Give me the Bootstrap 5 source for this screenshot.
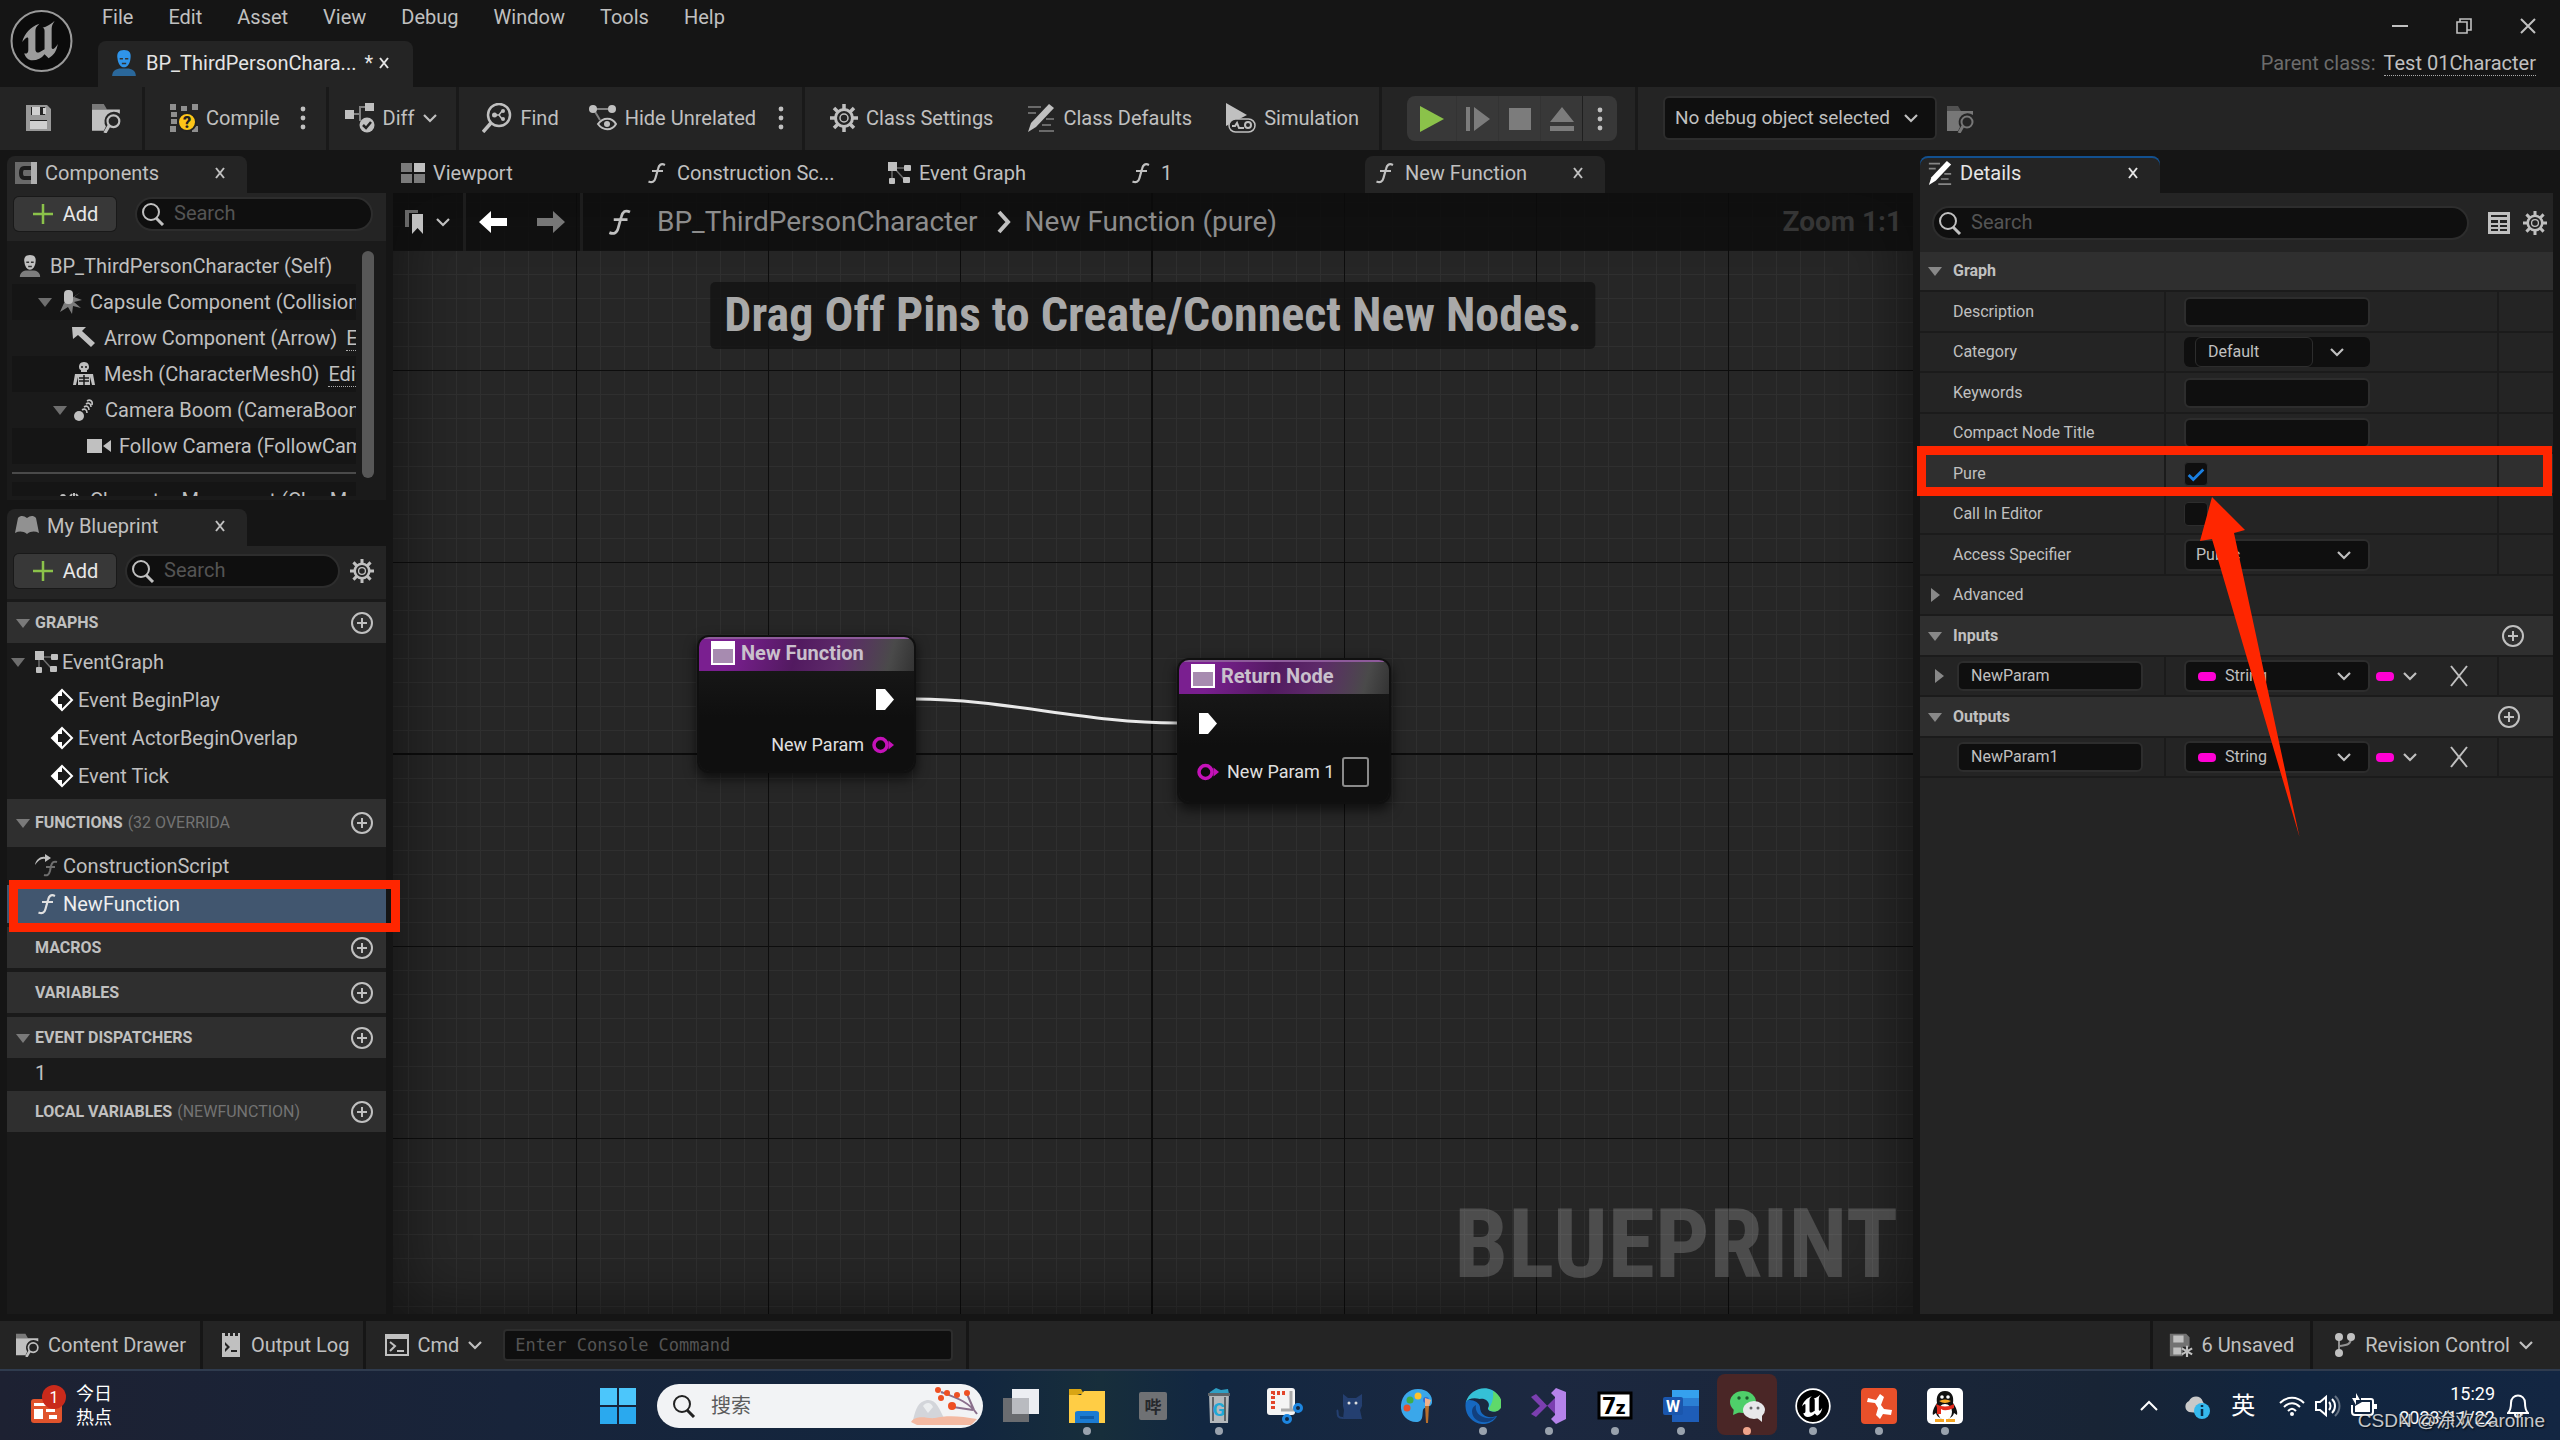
<!DOCTYPE html>
<html lang="en">
<head>
<meta charset="utf-8">
<meta name="viewport" content="width=device-width, initial-scale=1">
<title>BP_ThirdPersonCharacter</title>
<link href="https://cdn.jsdelivr.net/npm/bootstrap@5.3.0/dist/css/bootstrap.min.css" rel="stylesheet">
<style>
:root{--ink:#c0c0c0;--panel:#242424;--deep:#151515;--list:#1a1a1a;--head:#2f2f2f;--field:#0f0f0f;--red:#ff2600;--pink:#ff00d4}
body{font-family:Roboto,"Noto Sans CJK SC",sans-serif;font-size:20px;line-height:24px;color:var(--ink);background:var(--deep);min-height:100vh}
button,input,select{font:inherit;color:inherit}
button{background:none;border:0;padding:0;display:inline-flex;align-items:center;white-space:nowrap}
a,a:hover{color:inherit;text-decoration:none}
svg{display:block;flex:none;fill:currentColor;stroke:none;stroke-width:2}
.ln{fill:none;stroke:currentColor}
.i14{width:14px;height:14px}.i16{width:16px;height:16px}.i22{width:22px;height:22px}.i24{width:24px;height:24px}.i28{width:28px;height:28px}.i30{width:30px;height:30px}.i36{width:36px;height:36px}
.top-zone{height:87px}
.logo-box{width:98px;padding:9px 0 0 10px}
.menu-line{height:41px;padding-bottom:7px;gap:35px}
.menu-line a:first-child{margin-left:4px}
.doc-tab{height:46px;width:315px;background:var(--panel);border-radius:8px 8px 0 0;padding:0 0 2px 12px;color:#e4e4e4}
.dotted{border-bottom:1px dotted #aaa}
.toolbar-line{height:63px;background:var(--panel)}
.seg{padding:0 20px 2px 25px;gap:34px;border-right:3px solid #191919}
.seg.files{gap:39px}
.seg.build{gap:20px}
.seg.compare{padding:0 18px 2px 16px}
.seg.lookup{padding:0 18px 2px 23px;gap:22px}
.seg button,.stat button{gap:8px}
.play-group{margin:0 18px 0 25px;height:45px;background:#383838;border-radius:8px;overflow:hidden}
.play-group button{width:42px;justify-content:center;border-right:1px solid #333;color:#7c7c7c}
.play-group button:first-child{width:50px;color:#8bc24a}
.play-group button:nth-child(4){border-color:#1f1f1f}
.play-group button:last-child{width:34px;border:0;color:var(--ink)}
.combo{--bs-form-select-bg-img:url("data:image/svg+xml,%3Csvg xmlns='http://www.w3.org/2000/svg' viewBox='0 0 16 16'%3E%3Cpath d='M2 5l6 6 6-6' fill='none' stroke='%23c0c0c0' stroke-width='2.2'/%3E%3C/svg%3E");background-color:var(--field);border:2px solid #2d2d2d;border-radius:6px;color:var(--ink);background-size:16px 16px;background-position:right 16px center;padding:0 0 0 10px;line-height:20px}
.combo.debug-pick{width:274px;height:44px;font-size:19px;margin:0 10px 2px 25px}
.side-left{width:386px;padding-left:7px}
.side-right{width:640px;padding-right:7px}
.gut{width:7px}
.tab-line{height:43px;padding-top:6px}
.ptab{background:var(--panel);border-radius:8px 8px 0 0;width:240px;height:37px;padding:0 20px 3px 8px}
.graph-tabs>button{padding-bottom:3px}
.ptab .x{margin-left:auto}
.addbtn{width:102px;height:34px;flex:none;background:#383838;border-radius:5px;box-shadow:0 0 0 1px #191919;justify-content:center;color:#e8e8e8;gap:9px}
.seek{background:var(--field);border:2px solid #2d2d2d;border-radius:17px;height:34px;padding-left:4px;gap:9px}
.seek input{background:none;border:0;outline:0;min-width:0;padding:0 0 2px}
::placeholder{color:#545454!important;opacity:1}
.tree-box{background:var(--list);height:259px;padding:7px 11px 4px 5px}
.tree{height:248px;overflow:hidden;width:344px}
.tree li,.bp li{height:36px;display:flex;align-items:center;white-space:nowrap}
.tree li:nth-child(even){background:#151515}
.tree li svg:first-child,.bp li svg:first-child{color:#6e6e6e}
.tree li svg.on:first-child,.bp li svg.on{color:var(--ink)}
.tree .rule{height:18px;background:none!important}
.tree .rule i{height:2px;background:#4a4a4a;width:100%;display:block}
.lv0{padding-left:6px}.lv1{padding-left:25px}.lv2{padding-left:60px}.lv3{padding-left:40px}.lv4{padding-left:75px}
.tree li{gap:5px}.tree li span{margin-left:3px}
.thumb{width:12px;height:227px;border-radius:6px;background:#575757;margin:3px 0 0 6px}
.bp{background:var(--list);padding-top:3px}
.bp li{height:38px}
.bp .row-graph{padding-left:3px}
.bp .row-event{padding-left:43px}
.bp .row-item{padding-left:28px}
.bp .row-short{height:33px;padding-bottom:3px}
.bp h2{font-size:16px;font-weight:700;line-height:20px;height:41px;margin:0 0 4px;background:var(--head);padding:0 12px 0 8px;display:flex;align-items:center}
.bp h2 small{font-size:16px;font-weight:400;color:#737373;margin-left:5px}
.bp h2 .i16{color:#7a7a7a;margin-right:4px}
.bp h2 button{margin-left:auto}
.bp h2.flat{margin-bottom:0}
.bp h2.tall{height:48px}
.redbox{position:absolute;border:9px solid var(--red);pointer-events:none;z-index:5}
.redbox.on-list{inset:-5px -14px -9px 2px}
.redbox.on-prop{inset:-8px 1px -3px -3px}
.picked{position:relative;background:#41566f;color:#eee}
.picked svg.on{color:#e0e0e0!important}
.gt{gap:8px}
.w-tab{width:242px}
.canvas{position:relative;overflow:hidden;background-color:#262626;background-image:
 linear-gradient(#0c0c0c,#0c0c0c),linear-gradient(#0c0c0c,#0c0c0c),
 linear-gradient(90deg,#0d0d0d 1px,transparent 1px),linear-gradient(#0d0d0d 1px,transparent 1px),
 linear-gradient(90deg,#2f2f2f 1px,transparent 1px),linear-gradient(#2f2f2f 1px,transparent 1px);
 background-size:2px 100%,100% 2px,192px 192px,192px 192px,24px 24px,24px 24px;
 background-position:758px 0,0 560px,183px 177px,183px 177px,15px 9px,15px 9px;
 background-repeat:no-repeat,no-repeat,repeat,repeat,repeat,repeat}
.canvas::after{content:"";position:absolute;inset:0;box-shadow:inset 0 0 60px 8px rgba(0,0,0,.45);pointer-events:none}
.crumbs{position:relative;z-index:2;height:58px;background:rgba(12,12,12,.82);font-size:28px;line-height:32px;color:#8c8c8c;padding:0 11px 0 12px}
.crumbs .bar{width:3px;height:58px;background:#1d1d1d}
.hint{position:absolute;z-index:2;left:50%;top:89px;transform:translateX(-50%);height:67px;padding:0 14px;background:rgba(20,20,20,.85);color:#a9a9a9;border-radius:5px;font-weight:700;font-size:48px;line-height:65px;font-family:"Roboto Condensed",Roboto,sans-serif;white-space:nowrap}
.stamp{position:absolute;right:15px;bottom:20px;z-index:2;font-family:"Roboto Condensed",Roboto,sans-serif;font-weight:700;font-size:96px;line-height:100px;color:rgba(255,255,255,.18)}
.node{position:absolute;z-index:3;background:linear-gradient(#1c1c1c,#0f0f0f 60%);border-radius:10px;box-shadow:0 0 0 2px #101010,0 5px 12px 3px rgba(0,0,0,.6);color:#e0e0e0;font-size:18px;line-height:22px;overflow:hidden;white-space:nowrap}
.node header{height:34px;background:linear-gradient(105deg,#7a1f90 0,#7a1f90 15%,#521a60 45%,#5d2a69 65%,#4a4a4a 88%,#333);border-top:2px solid #8d5a9a;color:#c9c0cc;font-weight:700;font-size:20px;padding:0 12px 4px;gap:6px}
.node .flow-pin{height:56px;padding:0 20px}
.node .data-pin{height:36px;padding:0 20px}
.node.ret .flow-pin{height:58px}
.node.ret .data-pin{height:40px;padding:0 18px}
.node .tick{width:27px;height:30px;flex:none;border:2px solid #8a8a8a;border-radius:3px;background:none;appearance:none;margin:0}
.wire{position:absolute;left:502px;top:496px;z-index:2;width:304px;height:44px;fill:none}
.props{background:var(--panel);font-size:16px;line-height:20px}
.prop-tools{height:59px;padding:0 6px 0 12px;font-size:20px}
.prow{display:flex;height:40px;border-bottom:2px solid #1b1b1b}
.prow:nth-child(even){height:41px}
.prow>.c1{width:246px;border-right:2px solid #1b1b1b;padding-left:33px;display:flex;align-items:center}
.prow>.c1.named{padding-left:11px;gap:10px}
.prow>.c2{flex:1;border-right:2px solid #1b1b1b;padding-left:18px;display:flex;align-items:center}
.prow>.c3{width:54px}
.prow.hd{background:var(--head);font-weight:700;align-items:center;padding:0 28px 0 7px;gap:10px}
.prow.hd.adv{background:none;font-weight:400}
.prow.lit{background:var(--head);position:relative}
.prow .arr{color:#888}
.fld{background:var(--field);border:2px solid #2d2d2d;border-radius:6px;width:186px;height:30px;padding:0 12px 2px;line-height:18px}
.fld.inner{width:118px;margin-left:11px;border-width:1px}
.catbox{background:var(--field);border-radius:6px;width:186px;height:30px}
.combo.w{width:186px;height:32px;font-size:16px}
.combo.typed{padding-left:39px}
.pill{display:inline-block;width:18px;height:9px;border-radius:4px;background:var(--pink)}
.pill.over{position:absolute;left:14px;top:12px}
.kind{margin-left:6px}
.drop{margin-left:27px}
.drop svg{stroke-width:1px}
.tickbox{appearance:none;width:24px;height:24px;background:var(--field);border:1px solid #2d2d2d;border-radius:4px;margin:0}
.tickbox:checked{background-image:url("data:image/svg+xml,%3Csvg xmlns='http://www.w3.org/2000/svg' viewBox='0 0 24 24'%3E%3Cpath d='M4 13l5 5L20 7' fill='none' stroke='%231a7fe0' stroke-width='3'/%3E%3C/svg%3E")}
.pointer{position:absolute;left:280px;top:43px;width:100px;height:342px;color:var(--red);z-index:6;pointer-events:none}
.stat{height:48px;margin-top:7px;background:var(--panel)}
.stat>*{border-right:3px solid #161616}
.stat>.last{border-right:0;padding:0 26px 0 20px}
.stat>.side{padding:0 14px 0 16px}
.cons{font-family:"DejaVu Sans Mono","Liberation Mono",monospace;font-size:17px;background:var(--field);border:2px solid #2d2d2d;border-radius:4px;width:450px;height:32px;padding:0 10px;margin-left:20px}
.taskbar{height:71px;border-top:2px solid #2f3b4e;background:linear-gradient(90deg,#1d2132 0,#18243a 20%,#12263f 38%,#172e3b 43%,#122741 47%,#1c2840 60%,#182435 82%,#11253f 90%,#132642);color:#fff;position:relative}
.apps{gap:30px}
.app{width:36px;height:69px;position:relative;justify-content:center}
.app.run::after{content:"";position:absolute;bottom:5px;left:14px;width:8px;height:8px;border-radius:4px;background:#99a2ad}
.app.hot::before{content:"";position:absolute;inset:3px -12px 5px;background:#4a2626;border-radius:8px}
.app.hot::after{background:#f0a58c}
.app svg{position:relative}
.news{width:600px;padding-left:30px;gap:10px;font-size:18px}
.find-pill{width:326px;height:44px;border-radius:22px;background:#f2f3f5;color:#3c3c3c;padding-left:15px;gap:15px;margin:0 20px 0 21px}
.find-pill input{border:0;background:none;outline:0;width:150px;padding:0}
.find-pill input::placeholder{color:#5c5c5c!important}
.mark-note{position:absolute;right:15px;bottom:5px;font:19px/28px "Liberation Sans","Noto Sans CJK SC",sans-serif;color:#e4e4e4;text-shadow:1px 1px 2px #000;opacity:.85}
.clock{font-size:18px;line-height:24px;text-align:right}
</style>
<script src="https://cdn.jsdelivr.net/npm/bootstrap@5.3.0/dist/js/bootstrap.bundle.min.js"></script>
</head>
<body class="d-flex flex-column">
<svg width="0" height="0" class="position-absolute">
<defs>
<symbol id="x" viewBox="0 0 14 14"><path class="ln" d="M3 2l8 10M11 2L3 12"/></symbol>
<symbol id="chev" viewBox="0 0 16 16"><path class="ln" stroke-width="2.200" d="M2 5l6 6 6-6"/></symbol>
<symbol id="down" viewBox="0 0 16 16"><path d="M1 4h14L8 13z"/></symbol>
<symbol id="right" viewBox="0 0 16 16"><path d="M4 1l9 7-9 7z"/></symbol>
<symbol id="dots" viewBox="0 0 6 28"><circle cx="3" cy="5" r="2.400"/><circle cx="3" cy="14" r="2.400"/><circle cx="3" cy="23" r="2.400"/></symbol>
<symbol id="plus" viewBox="0 0 24 24"><circle class="ln" cx="12" cy="12" r="10"/><path class="ln" d="M12 7v10M7 12h10"/></symbol>
<symbol id="mag" viewBox="0 0 24 24"><circle class="ln" cx="10" cy="10" r="8"/><path class="ln" stroke-width="3" d="M15 16l7 7"/></symbol>
<symbol id="gear" viewBox="0 0 28 28"><circle class="ln" cx="14" cy="14" r="8.500" stroke-width="3"/><circle class="ln" cx="14" cy="14" r="4" stroke-width="1.500"/><g class="ln" stroke-width="3.500"><path d="M14 0v5M14 23v5M0 14h5M23 14h5M4 4l4 4M20 20l4 4M4 24l4-4M20 8l4-4"/></g></symbol>
<symbol id="fn" viewBox="0 0 24 24"><path class="ln" stroke-width="2.200" d="M20 4c-4-2-6 0-7 4l-2.500 9c-1 4-3.500 5-7 3.500M7 10h11"/></symbol>
<symbol id="save" viewBox="0 0 28 28"><path d="M1 1h21l4 4v22H1zM6 3v8h14V3zm-1 13v9h17v-9z" fill-rule="evenodd" opacity=".75"/><path d="M7 3h8v8H7zM18 4h3v6h-3zM5 17h17v8H5z" fill="#d0d0d0"/></symbol>
<symbol id="browse" viewBox="0 0 28 28"><path d="M0 1h11l3 5H0z" opacity=".55"/><path d="M0 6h26v4a9 9 0 0 0-13 12l-2 4H0z"/><circle class="ln" cx="20" cy="17" r="5.500"/><path class="ln" stroke-width="3" d="M16 21l-4 7"/></symbol>
<symbol id="nodes" viewBox="0 0 24 24"><path d="M1 1h9v9H1z"/><rect x="17" y="4" width="7" height="6" rx="1"/><rect x="16" y="16" width="7" height="6" rx="1"/><rect x="2" y="17" width="6" height="6" rx="1"/><path class="ln" opacity=".5" stroke-width="1.500" d="M5 10v8M9 7h9M9 9l8 9"/></symbol>
<symbol id="pencil" viewBox="0 0 28 28"><path d="M22 0l5 4L9 23 1 28l3-9z"/><path class="ln" opacity=".45" d="M1 3h13M1 9h8M19 15h8M15 21h9M12 27h15"/></symbol>
<symbol id="person" viewBox="0 0 24 26"><path d="M12 1c5 0 7 3 6 8-.5 5-3 8-6 8s-5.500-3-6-8C5 4 7 1 12 1z"/><path opacity=".6" d="M1 25c0-5 4-7 8-7h6c4 0 8 2 8 7z"/><path d="M8 9h3M13 9h3M10 13.500h4" stroke="#333" stroke-width="1.500" fill="none"/></symbol>
<symbol id="event" viewBox="0 0 24 24"><path class="ln" style="stroke:#fff" d="M12 2l10 10-10 10L2 12z"/><path fill="#fff" d="M12 2v6H8v8h4v6L2 12z"/></symbol>
<symbol id="expin" viewBox="0 0 18 21"><path fill="#fff" d="M0 0h9l9 10.500L9 21H0z"/></symbol>
<symbol id="dpin" viewBox="0 0 22 18"><circle cx="8.500" cy="9" r="6.500" fill="#0a0a0a" stroke="#c412b8" stroke-width="3.500"/><path fill="#c412b8" d="M16.500 4.500L22 9l-5.500 4.500z"/></symbol>
<symbol id="nico" viewBox="0 0 24 24"><path fill="#fff" d="M0 0h24v24H0z"/><path fill="#a78bb0" d="M2 8h20v14H2z"/></symbol>
<symbol id="ue" viewBox="0 0 62 62"><path d="M12 32c2-8 8-15 17-18-3 3-4 4-4 7v18c0 3 2 4 4 3l5-3V21c0-2-1-3-2-3 4-1 9-4 12-7-2 3-3 5-3 8v19c1 2 3 1 6-4-1 7-4 11-9 14l-4-4c-3 4-7 6-12 6-4 0-7-3-8-7 2 1 4 0 4-3V29c0-3-3-1-6 3z"/></symbol>
</defs>
</svg>

<header class="top-zone d-flex">
  <div class="logo-box"><svg width="63" height="64" viewBox="0 0 62 62"><circle cx="31" cy="31" r="29.500" fill="#0b0b0b" stroke="#9a9a9a" stroke-width="2"/><use href="#ue" fill="#9c9c9c"/></svg></div>
  <div class="flex-grow-1">
    <nav class="menu-line d-flex align-items-center"><a href="#">File</a><a href="#">Edit</a><a href="#">Asset</a><a href="#">View</a><a href="#">Debug</a><a href="#">Window</a><a href="#">Tools</a><a href="#">Help</a></nav>
    <div class="doc-tab d-flex align-items-center"><svg class="i28" style="color:#2f94ea"><use href="#person"/></svg><span class="ms-2">BP_ThirdPersonChara...</span><span class="ms-2">*</span><button class="ms-1" aria-label="Close"><svg class="i14"><use href="#x"/></svg></button></div>
  </div>
  <div class="d-flex flex-column align-items-end pe-4">
    <div class="d-flex align-items-center gap-5" style="height:51px">
      <button aria-label="Minimize"><svg class="i16" viewBox="0 0 16 16"><path class="ln" d="M0 8h16"/></svg></button>
      <button aria-label="Restore"><svg class="i16" viewBox="0 0 16 16"><path class="ln" stroke-width="1.600" d="M1 4h10v11H1zM4 4V1h11v11h-4"/></svg></button>
      <button aria-label="Close"><svg class="i16" viewBox="0 0 16 16"><path class="ln" d="M1 1l14 14M15 1L1 15"/></svg></button>
    </div>
    <div><span class="me-2" style="color:#6c6c6c">Parent class:</span><a href="#" class="dotted">Test 01Character</a></div>
  </div>
</header>

<div class="toolbar-line d-flex align-items-stretch">
  <div class="seg files d-flex"><button aria-label="Save"><svg class="i28"><use href="#save"/></svg></button><button aria-label="Browse"><svg class="i30"><use href="#browse"/></svg></button></div>
  <div class="seg build d-flex"><button><svg class="i28" viewBox="0 0 28 28"><g fill="#8f8f8f"><path d="M0 0h6v6H0zM11 2h6v5h-6zM22 0h6v6h-6zM1 8h6v5H1zM1 15h6v5H1zM0 22h6v6H0zM22 22h6v6h-6z"/></g><circle cx="17" cy="18" r="9" fill="#fdc518" stroke="#222"/><text x="17" y="24" text-anchor="middle" font-size="16" font-weight="900" fill="#222">?</text></svg>Compile</button><button aria-label="Compile options"><svg width="6" height="28"><use href="#dots"/></svg></button></div>
  <div class="seg compare d-flex"><button><svg class="i30" viewBox="0 0 30 30"><path d="M0 7h9v9H0zM20 0h9v8h-9z"/><path class="ln" opacity=".6" d="M9 11h6V4h5M15 11v7"/><circle cx="22" cy="22" r="7.500"/><path d="M18 22l3 3 5-6" stroke="#222" stroke-width="2.500" fill="none"/></svg>Diff<svg class="i16"><use href="#chev"/></svg></button></div>
  <div class="seg lookup d-flex"><button><svg class="i30" viewBox="0 0 30 30"><circle class="ln" cx="17" cy="12" r="11" stroke-width="2.500"/><path class="ln" stroke-width="3.500" d="M9 20l-8 9"/><circle cx="12.500" cy="12" r="2.500"/><circle cx="21" cy="8" r="2"/><circle cx="21" cy="16" r="2"/><path class="ln" stroke-width="1.500" d="M13 12h4l3-4M17 12l3 4"/></svg>Find</button>
  <button class="ms-2"><svg class="i28" viewBox="0 0 28 28"><circle cx="4" cy="5" r="4"/><circle cx="23" cy="5" r="4"/><path class="ln" opacity=".6" d="M5 5h18M5 6l6 10"/><path class="ln" d="M9 20c5-7 14-7 18 0-4 7-13 7-18 0z"/><circle cx="18" cy="20" r="3"/></svg>Hide Unrelated</button><button aria-label="Hide options"><svg width="6" height="28"><use href="#dots"/></svg></button></div>
  <div class="seg d-flex"><button><svg class="i28"><use href="#gear"/></svg>Class Settings</button><button><svg class="i28"><use href="#pencil"/></svg>Class Defaults</button><button><svg class="i30" viewBox="0 0 30 30"><path d="M0 0l21 12L0 23z"/><rect x="3" y="16" width="26" height="13" rx="6.500" fill="#242424" stroke="currentColor" stroke-width="1.500"/><circle class="ln" cx="22" cy="22" r="3"/><path class="ln" d="M6 23h3l2-3 2 5h5"/></svg>Simulation</button></div>
  <div class="seg d-flex align-items-center p-0"><div class="play-group d-flex">
    <button aria-label="Play"><svg width="26" height="26" viewBox="0 0 26 26"><path d="M1 0l24 13L1 26z"/></svg></button>
    <button aria-label="Step"><svg class="i24" viewBox="0 0 24 24"><path d="M0 0h4v24H0zM8 0l16 12L8 24z"/></svg></button>
    <button aria-label="Stop"><svg class="i22" viewBox="0 0 22 22"><path d="M0 0h22v22H0z"/></svg></button>
    <button aria-label="Eject"><svg class="i24" viewBox="0 0 24 24"><path d="M12 0l12 15H0zM0 19h24v5H0z"/></svg></button>
    <button aria-label="Play options"><svg width="6" height="28"><use href="#dots"/></svg></button></div></div>
  <div class="d-flex align-items-center"><select class="form-select combo debug-pick" aria-label="Debug object"><option>No debug object selected</option></select><button aria-label="Browse debug object" style="color:#777"><svg class="i28"><use href="#browse"/></svg></button></div>
</div>

<main class="d-flex flex-grow-1">
  <aside class="side-left d-flex flex-column">
    <div class="tab-line"><div class="ptab d-flex align-items-center"><svg class="i22" viewBox="0 0 22 22"><path d="M0 0h22v22H0z" opacity=".45"/><path d="M16 6H9q-3 0-3 5t3 5h7" fill="none" stroke="#1c1c1c" stroke-width="4"/><path d="M16 0h6v22h-6z" opacity=".8"/></svg><span class="ms-2">Components</span><button class="x" aria-label="Close"><svg class="i14"><use href="#x"/></svg></button></div></div>
    <div class="d-flex align-items-center" style="background:var(--panel);height:48px;padding:0 13px 7px 7px">
      <button class="addbtn"><svg class="i22" viewBox="0 0 22 22" style="color:#8bc24a"><path class="ln" stroke-width="2.500" d="M11 1v20M1 11h20"/></svg>Add</button>
      <label class="seek d-flex align-items-center flex-grow-1" style="margin-left:19px"><svg class="i24"><use href="#mag"/></svg><input class="w-100" placeholder="Search" aria-label="Search components"></label>
    </div>
    <div class="tree-box d-flex">
      <ul class="tree list-unstyled m-0">
        <li class="lv0"><svg class="i24 on"><use href="#person"/></svg><span>BP_ThirdPersonCharacter (Self)</span></li>
        <li class="lv1"><svg class="i16"><use href="#down"/></svg><svg class="i24" viewBox="0 0 24 24"><rect x="6" y="0" width="9" height="14" rx="4"/><path opacity=".6" d="M23 2l-7 5 8 3-8 2 7 6-8-2-1 8-4-7-8 5 4-9z"/></svg><span>Capsule Component (Collision</span></li>
        <li class="lv2"><svg class="i24 on" viewBox="0 0 24 24"><path d="M0 1h14l-4 4 13 12-4 4L6 9l-5 4z"/></svg><span>Arrow Component (Arrow)</span><a href="#" class="dotted ms-1">Edit in C++</a></li>
        <li class="lv2"><svg class="i24 on" viewBox="0 0 24 24"><path d="M12 0c4 0 5 3 5 5s-1 3-2 3v2H9V8C8 8 7 7 7 5s1-5 5-5zM3 12h18l2 11h-3l-2-8v8H6v-8l-2 8H1z"/><path d="M9 5h2M13 5h2M7 16h10M7 19h10M12 13v10" stroke="#181818" stroke-width="1.500"/></svg><span>Mesh (CharacterMesh0)</span><a href="#" class="dotted ms-1">Edit in C++</a></li>
        <li class="lv3"><svg class="i16"><use href="#down"/></svg><svg class="i24" viewBox="0 0 24 24"><circle cx="6" cy="18" r="5"/><path class="ln" stroke-width="1.600" d="M9 12c3-2 5 0 5 3M11 9c3-2 5 0 5 3M13 6c3-2 5 0 5 3M14 3c3-2 6 0 5 4"/></svg><span>Camera Boom (CameraBoom)</span></li>
        <li class="lv4"><svg class="i24 on" viewBox="0 0 24 24"><path d="M0 5h15v14H0zM24 6v12l-8-6z"/></svg><span>Follow Camera (FollowCamera)</span></li>
        <li class="rule"><i></i></li>
        <li class="lv1"><svg class="i16 invisible"><use href="#down"/></svg><svg class="i24" viewBox="0 0 24 24"><circle cx="5" cy="9" r="3"/><path class="ln" d="M16 5v6M11 10l3-4M21 10l-3-4M5 12v10"/></svg><span>Character Movement (CharMoveComp)</span></li>
      </ul>
      <div class="thumb"></div>
    </div>
    <div class="tab-line" style="height:46px;padding-top:9px"><div class="ptab d-flex align-items-center"><svg class="i24" viewBox="0 0 24 24"><path d="M3 4c3-3 6-2 9 0 3-2 6-3 9 0l3 15c-4-2-8-2-12 1-4-3-8-3-12-1z" opacity=".7"/></svg><span class="ms-2">My Blueprint</span><button class="x" aria-label="Close"><svg class="i14"><use href="#x"/></svg></button></div></div>
    <div class="d-flex align-items-center" style="background:var(--panel);height:53px;padding:0 12px 4px 7px">
      <button class="addbtn"><svg class="i22" viewBox="0 0 22 22" style="color:#8bc24a"><path class="ln" stroke-width="2.500" d="M11 1v20M1 11h20"/></svg>Add</button>
      <label class="seek d-flex align-items-center flex-grow-1" style="margin:0 10px 0 9px"><svg class="i24"><use href="#mag"/></svg><input class="w-100" placeholder="Search" aria-label="Search blueprint"></label>
      <button aria-label="Settings"><svg class="i24"><use href="#gear"/></svg></button>
    </div>
    <div class="bp flex-grow-1">
      <h2 class="flat"><svg class="i16"><use href="#down"/></svg>GRAPHS<button aria-label="Add graph"><svg class="i24"><use href="#plus"/></svg></button></h2>
      <ul class="list-unstyled m-0 pb-1">
        <li class="row-graph"><svg class="i16"><use href="#down"/></svg><svg class="i24 ms-2 on"><use href="#nodes"/></svg><span class="ms-1">EventGraph</span></li>
        <li class="row-event"><svg class="i24"><use href="#event"/></svg><span class="ms-1">Event BeginPlay</span></li>
        <li class="row-event"><svg class="i24"><use href="#event"/></svg><span class="ms-1">Event ActorBeginOverlap</span></li>
        <li class="row-event"><svg class="i24"><use href="#event"/></svg><span class="ms-1">Event Tick</span></li>
      </ul>
      <h2 class="flat tall"><svg class="i16"><use href="#down"/></svg>FUNCTIONS<small>(32 OVERRIDA</small><button aria-label="Add function"><svg class="i24"><use href="#plus"/></svg></button></h2>
      <ul class="list-unstyled m-0 pb-1">
        <li class="row-item"><svg class="i24" viewBox="0 0 24 24"><path class="ln" d="M22 8c-3-1-5 0-6 4l-1 5c-1 4-3 5-6 4M11 13h9"/><path fill="#c0c0c0" d="M0 11C1 5 6 2 10 3V0l6 4-6 4V5C6 4 3 7 0 11z"/></svg><span class="ms-1">ConstructionScript</span></li>
        <li class="picked row-item"><svg class="i24 on"><use href="#fn"/></svg><span class="ms-1">NewFunction</span><span class="redbox on-list"></span></li>
      </ul>
      <h2><svg class="i16 invisible"><use href="#down"/></svg>MACROS<button aria-label="Add macro"><svg class="i24"><use href="#plus"/></svg></button></h2>
      <h2><svg class="i16 invisible"><use href="#down"/></svg>VARIABLES<button aria-label="Add variable"><svg class="i24"><use href="#plus"/></svg></button></h2>
      <h2 class="flat"><svg class="i16"><use href="#down"/></svg>EVENT DISPATCHERS<button aria-label="Add dispatcher"><svg class="i24"><use href="#plus"/></svg></button></h2>
      <ul class="list-unstyled m-0"><li class="row-item row-short">1</li></ul>
      <h2><svg class="i16 invisible"><use href="#down"/></svg>LOCAL VARIABLES<small>(NEWFUNCTION)</small><button aria-label="Add local variable"><svg class="i24"><use href="#plus"/></svg></button></h2>
    </div>
  </aside>
  <div class="gut"></div>

  <section class="flex-grow-1 d-flex flex-column">
    <div class="tab-line graph-tabs d-flex align-items-center">
      <button class="gt ps-2" style="width:252px"><svg class="i24" viewBox="0 0 24 24"><path d="M0 2h11v9H0zM0 13h11v9H0zM13 13h11v9H13z" opacity=".6"/><path d="M13 2h11v9H13z"/></svg>Viewport</button>
      <button class="gt w-tab"><svg class="i24"><use href="#fn"/></svg>Construction Sc...</button>
      <button class="gt w-tab"><svg class="i24"><use href="#nodes"/></svg>Event Graph</button>
      <button class="gt" style="width:236px"><svg class="i24"><use href="#fn"/></svg>1</button>
      <div class="ptab d-flex align-items-center gt"><svg class="i24"><use href="#fn"/></svg>New Function<button class="x" aria-label="Close"><svg class="i14"><use href="#x"/></svg></button></div>
    </div>
    <div class="canvas flex-grow-1">
      <div class="crumbs d-flex align-items-center">
        <button aria-label="Bookmarks" style="gap:8px;color:#c0c0c0"><svg width="22" height="24" viewBox="0 0 22 24"><path d="M0 0h13v3H4v14H0z" opacity=".5"/><path d="M7 4h11v20l-5.500-6L7 24z"/></svg><svg class="i16"><use href="#chev"/></svg></button>
        <span class="bar" style="margin:0 13px 0 12px"></span>
        <button aria-label="Back" style="color:#fff"><svg class="i28" viewBox="0 0 28 28"><path d="M0 14L12 3v7h16v8H12v7z"/></svg></button>
        <button aria-label="Forward" style="margin:0 15px 0 30px;color:#777"><svg class="i28" viewBox="0 0 28 28"><path d="M28 14L16 3v7H0v8h16v7z"/></svg></button>
        <span class="bar"></span>
        <svg class="i30" style="margin:0 22px;color:#c0c0c0"><use href="#fn"/></svg>
        <span>BP_ThirdPersonCharacter</span>
        <svg width="16" height="24" viewBox="0 0 16 24" style="margin:0 13px 0 18px;color:#c0c0c0"><path class="ln" stroke-width="4" d="M3 2l9 10-9 10"/></svg>
        <span>New Function (pure)</span>
        <span class="ms-auto fw-bold" style="color:#353535">Zoom 1:1</span>
      </div>
      <div class="hint">Drag Off Pins to Create/Connect New Nodes.</div>
      <svg class="wire" viewBox="0 0 304 44"><path fill="none" stroke="#555" stroke-width="2" d="M0 10H20M282 34h22"/><path fill="none" stroke="#e8e8e8" stroke-width="3" d="M20 10C110 10 190 34 282 34"/></svg>
      <div class="node" style="left:306px;top:444px;width:215px;height:134px">
        <header class="d-flex align-items-center"><svg class="i24"><use href="#nico"/></svg>New Function</header>
        <div class="flow-pin d-flex align-items-center justify-content-end"><svg width="18" height="21"><use href="#expin"/></svg></div>
        <div class="data-pin d-flex align-items-center justify-content-end gap-2">New Param<svg width="22" height="18"><use href="#dpin"/></svg></div>
      </div>
      <div class="node ret" style="left:786px;top:467px;width:210px;height:142px">
        <header class="d-flex align-items-center"><svg class="i24"><use href="#nico"/></svg>Return Node</header>
        <div class="flow-pin d-flex align-items-center"><svg width="18" height="21"><use href="#expin"/></svg></div>
        <div class="data-pin d-flex align-items-center gap-2"><svg width="22" height="18"><use href="#dpin"/></svg><label for="np1">New Param 1</label><input id="np1" type="checkbox" class="tick"></div>
      </div>
      <div class="stamp">BLUEPRINT</div>
    </div>
  </section>
  <div class="gut"></div>

  <aside class="side-right d-flex flex-column">
    <div class="tab-line"><div class="ptab d-flex align-items-center" style="color:#e6e6e6;box-shadow:inset 0 2px #12508f"><svg class="i24" style="color:#fff"><use href="#pencil"/></svg><span class="ms-2">Details</span><button class="x" aria-label="Close"><svg class="i14"><use href="#x"/></svg></button></div></div>
    <div class="props flex-grow-1">
      <div class="prop-tools d-flex align-items-center">
        <label class="seek d-flex align-items-center flex-grow-1"><svg class="i24"><use href="#mag"/></svg><input class="w-100" placeholder="Search" aria-label="Search details"></label>
        <button aria-label="Property matrix" style="margin:0 12px 0 18px"><svg class="i24" viewBox="0 0 24 24"><path fill-rule="evenodd" d="M1 1h22v22H1zM4 4v2h16V4zM4 9v3h7V9zM13 9v3h7V9zM4 14v2h7v-2zM13 14v2h7v-2zM4 18v2h7v-2zM13 18v2h7v-2z"/></svg></button>
        <button aria-label="Settings"><svg class="i24"><use href="#gear"/></svg></button>
      </div>
      <div>
        <div class="prow hd"><svg class="i16 arr"><use href="#down"/></svg>Graph</div>
        <div class="prow"><label class="c1" for="p1">Description</label><div class="c2"><input id="p1" class="fld"></div><div class="c3"></div></div>
        <div class="prow"><label class="c1" for="p2">Category</label><div class="c2"><div class="catbox d-flex align-items-center"><input id="p2" class="fld inner" value="Default"><button class="ms-3" aria-label="Pick category"><svg class="i16"><use href="#chev"/></svg></button></div></div><div class="c3"></div></div>
        <div class="prow"><label class="c1" for="p3">Keywords</label><div class="c2"><input id="p3" class="fld"></div><div class="c3"></div></div>
        <div class="prow"><label class="c1" for="p4">Compact Node Title</label><div class="c2"><input id="p4" class="fld"></div><div class="c3"></div></div>
        <div class="prow lit"><label class="c1" for="p5">Pure</label><div class="c2"><input id="p5" type="checkbox" class="tickbox" checked></div><div class="c3"></div><span class="redbox on-prop"></span>
          <svg class="pointer" viewBox="0 0 100 342"><path d="M12 0L45 33 34 36 99.500 340 12 42 0 44z"/></svg></div>
        <div class="prow"><label class="c1" for="p6">Call In Editor</label><div class="c2"><input id="p6" type="checkbox" class="tickbox"></div><div class="c3"></div></div>
        <div class="prow"><label class="c1" for="p7">Access Specifier</label><div class="c2"><select id="p7" class="form-select combo w"><option>Public</option></select></div><div class="c3"></div></div>
        <div class="prow hd adv"><svg class="i16 arr"><use href="#right"/></svg>Advanced</div>
        <div class="prow hd"><svg class="i16 arr"><use href="#down"/></svg>Inputs<button class="ms-auto" aria-label="Add input"><svg class="i24"><use href="#plus"/></svg></button></div>
        <div class="prow"><div class="c1 named"><svg class="i16 arr"><use href="#right"/></svg><input class="fld" value="NewParam" aria-label="Input name"></div><div class="c2"><div class="position-relative"><select class="form-select combo w typed" aria-label="Input type"><option>String</option></select><i class="pill over"></i></div><button class="kind gap-2" aria-label="Container type"><i class="pill"></i><svg class="i16"><use href="#chev"/></svg></button><button class="drop" aria-label="Remove"><svg class="i28"><use href="#x"/></svg></button></div><div class="c3"></div></div>
        <div class="prow hd"><svg class="i16 arr"><use href="#down"/></svg>Outputs<button class="ms-auto me-1" aria-label="Add output"><svg class="i24"><use href="#plus"/></svg></button></div>
        <div class="prow"><div class="c1 named"><svg class="i16 invisible"></svg><input class="fld" value="NewParam1" aria-label="Output name"></div><div class="c2"><div class="position-relative"><select class="form-select combo w typed" aria-label="Output type"><option>String</option></select><i class="pill over"></i></div><button class="kind gap-2" aria-label="Container type"><i class="pill"></i><svg class="i16"><use href="#chev"/></svg></button><button class="drop" aria-label="Remove"><svg class="i28"><use href="#x"/></svg></button></div><div class="c3"></div></div>
      </div>
    </div>
  </aside>
</main>

<div class="stat d-flex">
  <button class="side"><svg class="i24"><use href="#browse"/></svg>Content Drawer</button>
  <button class="side"><svg class="i24" viewBox="0 0 24 24"><path fill-rule="evenodd" d="M3 0h3v3h3V0h2v3h3V0h2v3h3V0h2v24H3zM6 9l5 5-5 5v-3l2-2-2-2zM12 17v2h6v-2z"/></svg>Output Log</button>
  <div class="d-flex align-items-center" style="padding:0 13px 0 19px"><button><svg class="i24" viewBox="0 0 24 24"><path class="ln" d="M1 2h22v20H1z"/><path d="M1 2h22v4H1z"/><path class="ln" d="M5 9l5 4-5 5M12 18h7"/></svg>Cmd<svg class="i16"><use href="#chev"/></svg></button><input class="cons" placeholder="Enter Console Command" aria-label="Console command"></div>
  <div class="flex-grow-1"></div>
  <button class="side pe-3"><svg class="i24" viewBox="0 0 28 28"><path d="M1 1h19l4 4v11h-8v11H1z" opacity=".5"/><path d="M5 3h12v8H5zM5 17h9v8H5z"/><path class="ln" stroke-width="2.500" d="M21 15v13M15 18l12 7M27 18l-12 7"/></svg>6 Unsaved</button>
  <button class="last"><svg class="i24" viewBox="0 0 24 24"><circle cx="6" cy="4" r="4"/><circle cx="18" cy="4" r="4"/><circle cx="6" cy="20" r="4"/><path class="ln" opacity=".7" d="M6 5v14M18 5c0 6-3 7-11 8"/></svg>Revision Control<svg class="i16"><use href="#chev"/></svg></button>
</div>

<footer class="taskbar d-flex align-items-center">
  <button class="news flex-shrink-0"><svg width="36" height="42" viewBox="0 0 36 42"><rect x="1" y="14" width="31" height="24" rx="3" fill="#e0532c"/><path fill="#fff" d="M4 18h14v3H4zM4 24h9v10H4zM16 24h9v3h-9zM19 30h8v4h-8z"/><circle cx="24" cy="12" r="12" fill="#c92a1b"/><text x="24" y="18" font-size="16" text-anchor="middle" fill="#fff">1</text></svg><span class="text-start">今日<br>热点</span></button>
  <button class="app flex-shrink-0" aria-label="Start"><svg class="i36" viewBox="0 0 36 36"><path fill="#4cc6fb" d="M0 0h17v17H0zM19 0h17v17H19z"/><path fill="#2aa9ee" d="M0 19h17v17H0zM19 19h17v17H19z"/></svg></button>
  <label class="find-pill d-flex align-items-center flex-shrink-0"><svg class="i24" style="color:#222"><use href="#mag"/></svg><input placeholder="搜索" aria-label="搜索"><svg width="72" height="40" viewBox="0 0 72 40" class="ms-auto"><path fill="#d3d5da" d="M2 34c3-12 5-18 14-20 9-1 12 8 18 20z"/><path fill="#eceef0" d="M12 20c3-4 8-4 10 1l-5 6z"/><path fill="#f3b9a2" d="M0 36c6-8 16-3 24-4 12-3 26-2 42 1l-6 6H6z"/><path d="M66 28C58 16 46 12 30 6M63 24L56 8M62 24L42 21" fill="none" stroke="#8a6f8c" stroke-width="2"/><g fill="#ee4f22"><circle cx="27" cy="4" r="3"/><circle cx="36" cy="7" r="3"/><circle cx="30" cy="12" r="3"/><circle cx="46" cy="9" r="3"/><circle cx="56" cy="7" r="3"/><circle cx="41" cy="20" r="4"/></g></svg></label>
  <div class="apps d-flex">
    <button class="app" aria-label="Task view"><svg class="i36" viewBox="0 0 36 36"><path fill="#6a6c70" d="M0 10h26v24H0z"/><path fill="#eceef2" d="M9 1h27v25H9z"/><path fill="#b9bbc0" d="M9 10h17v16H9z"/></svg></button>
    <button class="app run" aria-label="File Explorer"><svg class="i36" viewBox="0 0 36 36"><path fill="#d9a514" d="M0 1h12l3 5h-4L0 10z"/><path fill="#ffcd45" d="M0 7h12l3-4h21v32H0z"/><path fill="#1b7bd2" d="M6 35V25q0-2 3-2h18q3 0 3 2v10z"/><path fill="#0f5ca8" d="M11 28h14v3H11z"/></svg></button>
    <button class="app" aria-label="Bili"><svg class="i36" viewBox="0 0 36 36"><rect x="4" y="4" width="28" height="28" rx="2" fill="#6f7174"/><text x="18" y="25" font-size="17" font-weight="700" text-anchor="middle" fill="#26282c">哔</text></svg></button>
    <button class="app run" aria-label="Geek Uninstaller"><svg class="i36" viewBox="0 0 36 36"><path fill="#2f9fc4" d="M9 4l6-4 5 2 7-1 1 5H8z"/><path fill="#b4b8bb" d="M8 5h20l-1 30H9z"/><path fill="#5f6468" d="M11 9h2v24h-2zM23 9h2v24h-2zM7 5h22v3H7z"/><text x="18" y="28" font-size="18" font-weight="700" text-anchor="middle" fill="#20a8d8">G</text></svg></button>
    <button class="app" aria-label="Snipping Tool"><svg class="i36" viewBox="0 0 36 36"><rect x="0" y="0" width="28" height="27" rx="3" fill="#f4f4f4"/><path d="M6 21V5h14" fill="none" stroke="#e2452a" stroke-width="4" stroke-dasharray="3 2"/><path d="M24 3v20M14 22h14" stroke="#aaa" stroke-width="3" fill="none"/><g fill="none" stroke="#1d86e0" stroke-width="3"><circle cx="31" cy="20" r="3.500"/><circle cx="20" cy="31" r="3.500"/></g></svg></button>
    <button class="app" aria-label="Clash"><svg class="i36" viewBox="0 0 36 36"><path fill="#243f70" d="M10 6l5 4h8l6-4v12l-2 4 2 9H10l1-9-1-4z"/><path d="M10 30c-8 0-4-6-6-8" fill="none" stroke="#243f70" stroke-width="2"/><circle cx="16" cy="15" r="1.500" fill="#ddd"/><circle cx="23" cy="15" r="1.500" fill="#ddd"/></svg></button>
    <button class="app" aria-label="Paint"><svg class="i36" viewBox="0 0 36 36"><path fill="#3aa7ea" d="M19 1c10 0 15 7 14 14-1 5-8 3-9 7s1 12-7 12S1 27 2 17 10 1 19 1z"/><circle cx="11" cy="12" r="3.500" fill="#3fae49"/><circle cx="19" cy="8" r="3.500" fill="#ffc32b"/><circle cx="27" cy="12" r="3" fill="#2e6fd8"/><circle cx="8" cy="20" r="3.500" fill="#e5502e"/><path fill="#f0b08a" d="M26 10l6 2-2 6h-4z"/><path fill="#b86f2b" d="M26 18h4l-1 17h-2z"/></svg></button>
    <button class="app run" aria-label="Edge"><svg class="i36" viewBox="0 0 36 36"><path fill="#1668c0" d="M1 13C-2 26 8 37 20 36c6-1 10-4 12-8-8 3-17 0-17-9 0-5-10-9-14-6z"/><path fill="#35c1d6" d="M1 14C4 3 17-3 27 2c9 5 11 15 7 19-3 4-12 3-11-1 3-5-2-10-8-9C8 9 3 11 1 14z"/><path fill="#5fd96a" d="M28 3c9 5 11 14 7 18-3 4-12 3-11-1 3-4 5-10 4-17z"/><path fill="#12407e" d="M11 17c-2 9 8 16 20 12-8 9-24 6-24-6 0-3 2-5 4-6z"/></svg></button>
    <button class="app run" aria-label="Visual Studio"><svg class="i36" viewBox="0 0 36 36"><path fill="#7b3fb0" d="M0 9l5-3 21 22V8L5 29l-5-3 9-8z"/><path fill="#b583ea" d="M25 0l10 4v27l-10 5-5-5 4-4V9l-4-4z"/></svg></button>
    <button class="app run" aria-label="7-Zip"><svg class="i36" viewBox="0 0 36 36"><path fill="#fff" stroke="#000" stroke-width="3" d="M2 5h32v25H2z"/><text x="17" y="26" font-size="23" font-weight="900" text-anchor="middle" fill="#000">7<tspan font-size="19">z</tspan></text></svg></button>
    <button class="app run" aria-label="Word"><svg class="i36" viewBox="0 0 36 36"><path fill="#35a1ee" d="M9 2h27v9H9z"/><path fill="#2b7fd4" d="M9 10h27v8H9z"/><path fill="#1e5db8" d="M9 18h27v16H9z"/><rect y="9" width="20" height="18" rx="2" fill="#1a56ad"/><text x="10" y="24" font-size="16" font-weight="700" text-anchor="middle" fill="#fff">W</text></svg></button>
    <button class="app run hot" aria-label="WeChat"><svg class="i36" viewBox="0 0 36 36"><ellipse cx="14" cy="14" rx="13" ry="11" fill="#4fcf6a"/><path fill="#4fcf6a" d="M5 20l-1 7 7-3z"/><circle cx="10" cy="10" r="1.700" fill="#1c5a2b"/><circle cx="18" cy="10" r="1.700" fill="#1c5a2b"/><ellipse cx="25" cy="22" rx="11" ry="9" fill="#e8e8ea"/><path fill="#e8e8ea" d="M27 29l6 5v-8z"/><circle cx="22" cy="20" r="1.500" fill="#666"/><circle cx="29" cy="20" r="1.500" fill="#666"/></svg></button>
    <button class="app run" aria-label="Unreal Editor"><svg class="i36" viewBox="0 0 62 62"><circle cx="31" cy="31" r="29" fill="#000" stroke="#fff" stroke-width="3"/><use href="#ue" fill="#fff"/></svg></button>
    <button class="app run" aria-label="Xmind"><svg class="i36" viewBox="0 0 36 36"><rect width="36" height="36" rx="4" fill="#e8502a"/><path fill="#fff" d="M7 10l8 2 4-6 4 3-3 8 3 4 8 1-1 5-8-1-3 5-4-4 2-7-3-5-8-1z"/></svg></button>
    <button class="app run" aria-label="QQ"><svg class="i36" viewBox="0 0 36 36"><rect width="36" height="36" rx="5" fill="#fff"/><path fill="#111" d="M18 3c7 0 9 6 8 12 3 4 5 9 4 12l-3-2c-2 8-16 8-18 0l-3 2c-1-3 1-8 4-12-1-6 1-12 8-12z"/><ellipse cx="18" cy="24" rx="7" ry="8" fill="#fff"/><circle cx="15" cy="9" r="1.800" fill="#fff"/><circle cx="21" cy="9" r="1.800" fill="#fff"/><path fill="#f5a623" d="M12 13q6-3 12 0-6 4-12 0zM8 31h9v3H8zM19 31h9v3h-9z"/><path fill="#e42b1e" d="M9 16q9 5 18 0v4q-9 4-13 1v5h-4v-6z"/></svg></button>
  </div>
  <div class="ms-auto d-flex align-items-center" style="padding-right:31px">
    <button aria-label="Show hidden icons"><svg class="i22" viewBox="0 0 22 22"><path class="ln" d="M3 15l8-8 8 8"/></svg></button>
    <button aria-label="OneDrive" style="margin:0 21px 0 22px"><svg class="i28" viewBox="0 0 28 28"><path fill="#c9c9c9" d="M7 20a6 6 0 0 1 0-11c3-6 12-6 14 1l3 4-8 7z"/><circle cx="20" cy="19" r="8" fill="#35b9ee"/><path stroke="#0b2d4a" stroke-width="2.500" d="M20 17v7M20 13v2"/></svg></button>
    <span style="font-size:24px">英</span>
    <button aria-label="Network and sound" style="gap:10px;margin:0 22px 0 24px"><svg width="26" height="26" viewBox="0 0 26 26"><path class="ln" d="M1 10c7-7 17-7 24 0M5 14c5-5 11-5 16 0M9 18c3-3 5-3 8 0"/><circle cx="13" cy="21" r="2"/></svg><svg width="26" height="24" viewBox="0 0 26 24"><path class="ln" d="M1 8h4l6-5v18l-6-5H1z"/><path class="ln" d="M14 8c2 2 2 6 0 8M17 5c4 4 4 10 0 14"/><path class="ln" opacity=".35" d="M20 2c6 6 6 14 0 20"/></svg><svg width="26" height="26" viewBox="0 0 26 26"><path class="ln" d="M10 6h10q2 0 2 2v11q0 3-3 3H4q-3 0-3-3v-7"/><path d="M4 13l7-4h8v10H4zM23 11h3v5h-3zM5 0v5H1l4 7V7h4z"/></svg></button>
    <div class="clock">15:29<br>2023/11/22</div>
    <button aria-label="Notifications" style="margin-left:12px"><svg width="22" height="26" viewBox="0 0 22 26"><path class="ln" d="M1 20c3-3 3-6 3-10 0-10 14-10 14 0 0 4 0 7 3 10z"/><path class="ln" d="M8 21c0 4 6 4 6 0"/></svg></button>
  </div>
  <div class="mark-note">CSDN @涂欢Caroline</div>
</footer>
</body>
</html>
